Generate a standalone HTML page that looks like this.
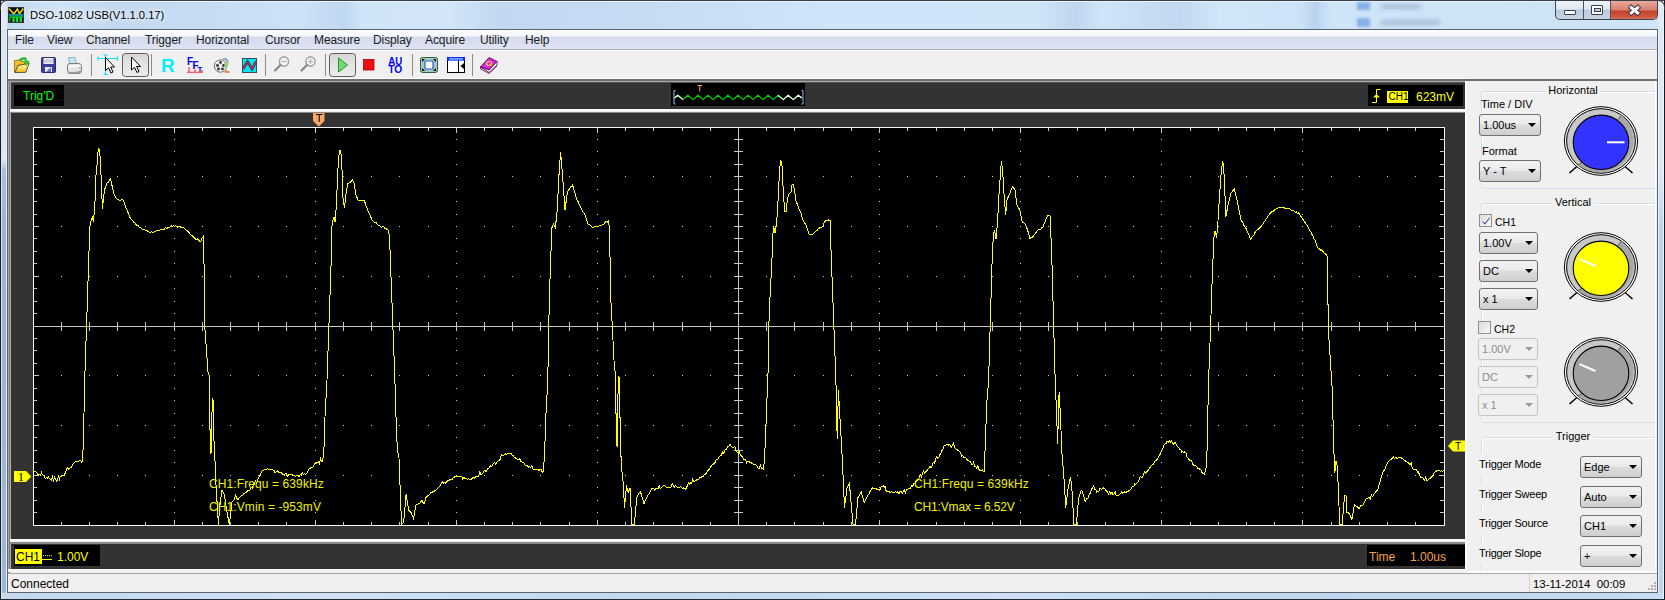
<!DOCTYPE html>
<html><head><meta charset="utf-8">
<style>
*{margin:0;padding:0;box-sizing:border-box}
html,body{width:1665px;height:600px;overflow:hidden;background:#c6ddf3;font-family:"Liberation Sans",sans-serif;font-size:12px;color:#000}
.a{position:absolute}
svg.a{overflow:visible}
#title{left:0;top:0;width:1665px;height:30px;background:linear-gradient(90deg,#c0d8f0 0.00%,#cfe3f7 3.60%,#c2d9f1 6.61%,#c6dcf3 12.01%,#cde2f7 18.02%,#bfd7f0 20.72%,#d0e4f8 21.62%,#d2e5f9 27.03%,#c2d8f0 30.03%,#c4daf2 33.63%,#c6dcf3 38.44%,#cfe4f9 49.85%,#d0e4f8 62.46%,#bfd6ee 64.56%,#d0e4f8 66.07%,#c2d8f0 70.87%,#d2e6f9 73.27%,#cde2f7 78.08%,#b8d3f0 78.98%,#d0e4f8 79.88%,#cfe3f7 93.09%,#cfe4f8 100.00%)}
#menu span{position:absolute;top:3px;font-size:12px;color:#1e1e1e;letter-spacing:-0.1px}
.dark{background:#333333}
.box{background:#000}
.cb{height:22px;border:1px solid #707070;border-radius:3px;background:linear-gradient(#f2f2f2 0%,#ebebeb 45%,#dddddd 50%,#cfcfcf 100%);font-size:11px;color:#000}
.cb span{position:absolute;left:3px;top:4px;white-space:pre}
.cb i{position:absolute;right:4px;top:8px;width:0;height:0;border-left:4px solid transparent;border-right:4px solid transparent;border-top:4px solid #000}
.cb.dis{border-color:#c6c6c6;background:#f0f0f0;color:#8d8d8d}
.cb.dis i{border-top-color:#9a9a9a}
.gb{border:1px solid #d5dfe5;border-radius:3px;box-shadow:inset 1px 1px 0 #fff}
.gl{background:#f0f0f0;text-align:center;font-size:11px;color:#000;height:14px;line-height:14px}
.lbl{font-size:11px;color:#000;white-space:pre;line-height:14px}
.tl{letter-spacing:-0.25px}
.chk{width:13px;height:13px;border:1px solid #8f8f8f;background:linear-gradient(135deg,#dcdcdc,#fafafa)}
.chk.on::after{content:"";position:absolute;left:3.5px;top:1px;width:3px;height:7px;border-right:1.6px solid #4058a0;border-bottom:1.6px solid #4058a0;transform:rotate(38deg)}
.stxt{font-size:12px;white-space:pre}
</style></head><body>
<div id="title" class="a"></div>
<!-- window frame -->
<div class="a" style="left:0;top:0;width:1665px;height:1px;background:#3a3f47"></div>
<div class="a" style="left:1px;top:1px;width:1663px;height:1px;background:#eaf3fb"></div>
<div class="a" style="left:0;top:0;width:1px;height:600px;background:#141a22"></div>
<div class="a" style="left:1px;top:2px;width:1px;height:597px;background:#e2eaf2"></div>
<div class="a" style="left:2px;top:30px;width:4px;height:569px;background:linear-gradient(#dce4ee 0px,#dfe7f0 130px,#a8c0dc 140px,#98b4d4 200px,#9cb8d8 100%)"></div>
<div class="a" style="left:6px;top:30px;width:1px;height:569px;background:#e0ecf8"></div>
<div class="a" style="left:1664px;top:0;width:1px;height:600px;background:#141a22"></div>
<div class="a" style="left:1663px;top:2px;width:1px;height:597px;background:#f0f4fa"></div>
<div class="a" style="left:1658px;top:30px;width:1px;height:569px;background:#e8f0f8"></div>
<div class="a" style="left:1659px;top:30px;width:4px;height:569px;background:linear-gradient(#dce8f4 0px,#dde9f5 140px,#bcd4ec 200px,#bcd4ec 100%)"></div>
<div class="a" style="left:2px;top:593px;width:1661px;height:6px;background:linear-gradient(90deg,#c4d8ee,#cfe2f6 20%,#c2d8ef 40%,#cde0f5 60%,#c0d6ee 80%,#c8dcf2)"></div>
<div class="a" style="left:0;top:599px;width:1665px;height:1px;background:#1e2630"></div>
<div class="a" style="left:1px;top:2px;width:6px;height:28px;background:linear-gradient(90deg,#e6edf5,#dbe6f2)"></div>
<div class="a" style="left:1658px;top:2px;width:6px;height:28px;background:linear-gradient(90deg,#dde8f4,#e6eef6)"></div>
<div class="a" style="left:0;top:0;width:10px;height:10px;border-top:1px solid #3a3f47;border-left:1px solid #3a3f47;border-top-left-radius:7px;box-shadow:inset 1px 1px 0 #f2f6fa"></div>
<div class="a" style="left:1655px;top:0;width:10px;height:10px;border-top:1px solid #3a3f47;border-right:1px solid #3a3f47;border-top-right-radius:7px;box-shadow:inset -1px 1px 0 #f2f6fa"></div>
<!-- title icon -->
<svg class="a" style="left:8px;top:7px" width="16" height="16" viewBox="0 0 16 16">
<rect x="0.5" y="0.5" width="15" height="15" fill="#000" stroke="#3a3434"/>
<polyline points="1,1.6 5.8,7 9.4,2 11.5,7 15.1,1.5" fill="none" stroke="#f0e000" stroke-width="1.5"/>
<rect x="1" y="6.9" width="14" height="2" fill="#119a9a"/>
<polyline points="1.9,14.6 1.9,9.9 4.9,9.9 4.9,14.4 6.1,14.4 6.1,9.9 8.5,9.9 8.5,14.4 9.7,14.4 9.7,9.9 12.1,9.9 12.1,14.4 13.3,14.4 13.3,9.9 15,9.9" fill="none" stroke="#10e030" stroke-width="1.2"/>
</svg>
<div class="a" style="left:30px;top:9px;font-size:11.2px;color:#000;text-shadow:0 0 4px #fff,0 0 6px #fff">DSO-1082 USB(V1.1.0.17)</div>
<!-- faint background items in title (desktop behind glass) -->
<div class="a" style="left:1357px;top:2px;width:13px;height:8px;background:#78a8e0;filter:blur(1.6px);opacity:.85"></div>
<div class="a" style="left:1381px;top:4px;width:40px;height:5px;background:#a0b4d0;filter:blur(2px);opacity:.8"></div>
<div class="a" style="left:1357px;top:18px;width:13px;height:9px;background:#78a8e0;filter:blur(1.6px);opacity:.85"></div>
<div class="a" style="left:1381px;top:20px;width:59px;height:5px;background:#a0b4d0;filter:blur(2px);opacity:.8"></div>
<!-- window buttons -->
<div class="a" style="left:1555px;top:1px;width:103px;height:19px;border:1px solid #3c4450;border-top:none;border-radius:0 0 5px 5px;overflow:hidden;background:linear-gradient(#eef3f9 0%,#dfe8f2 45%,#bccbdc 50%,#c5d3e2 100%)">
 <div class="a" style="left:27px;top:0;width:1px;height:20px;background:#4a5260"></div>
 <div class="a" style="left:54px;top:0;width:1px;height:20px;background:#4a5260"></div>
 <div class="a" style="left:55px;top:0;width:48px;height:20px;background:linear-gradient(#e8a898 0%,#d88070 45%,#c4402c 50%,#d05a40 80%,#e08a70 100%)"></div>
</div>
<div class="a" style="left:1564px;top:10px;width:12px;height:5px;background:#fff;border:1px solid #39404c;border-radius:1px"></div>
<div class="a" style="left:1591px;top:5px;width:12px;height:10px;background:transparent;border:1px solid #39404c;border-radius:1px;box-shadow:inset 0 0 0 2px #fff"></div>
<div class="a" style="left:1594px;top:8px;width:7px;height:4px;border:1px solid #39404c"></div>
<svg class="a" style="left:1627px;top:4px" width="15" height="12" viewBox="0 0 15 12"><path d="M4.3 3.6L10.7 8.9M10.7 3.6L4.3 8.9" stroke="#3a3a48" stroke-width="5" stroke-linecap="square"/><path d="M4.3 3.6L10.7 8.9M10.7 3.6L4.3 8.9" stroke="#fff" stroke-width="3" stroke-linecap="square"/></svg>

<!-- client -->
<div class="a" style="left:7px;top:29px;width:1651px;height:564px;background:#f0f0f0;border:1px solid #5b6570"></div>
<div id="menu" class="a" style="left:8px;top:30px;width:1649px;height:20px;background:linear-gradient(#fbfcfe 0px,#f7f8fc 6px,#d5dcee 7px,#d9dff0 13px,#e0e5f4 19px);border-bottom:1px solid #a9aeba">
<span style="left:7px">File</span><span style="left:39px">View</span><span style="left:78px">Channel</span><span style="left:137px">Trigger</span><span style="left:188px">Horizontal</span><span style="left:257px">Cursor</span><span style="left:306px">Measure</span><span style="left:365px">Display</span><span style="left:417px">Acquire</span><span style="left:472px">Utility</span><span style="left:517px">Help</span>
</div>
<div class="a" style="left:8px;top:50px;width:1649px;height:1px;background:#fdfdfd"></div>
<!-- toolbar -->
<svg class="a" style="left:0;top:0" width="520" height="80" viewBox="0 0 520 80">
<!-- separators -->
<g fill="#8a8a8a"><rect x="91" y="54" width="1" height="22"/><rect x="151" y="54" width="1" height="22"/><rect x="265" y="54" width="1" height="22"/><rect x="325" y="54" width="1" height="22"/><rect x="412" y="54" width="1" height="22"/><rect x="472" y="54" width="1" height="22"/></g>
<!-- pressed buttons -->
<rect x="122.5" y="53.5" width="26" height="23" rx="3" fill="url(#pg)" stroke="#5d5d5d"/>
<rect x="329.5" y="53.5" width="26" height="23" rx="3" fill="url(#pg)" stroke="#5d5d5d"/>
<defs><linearGradient id="pg" x1="0" y1="0" x2="0" y2="1"><stop offset="0" stop-color="#d6d6d6"/><stop offset="0.5" stop-color="#e4e4e4"/><stop offset="1" stop-color="#ececec"/></linearGradient>
<linearGradient id="fold" x1="0" y1="0" x2="0" y2="1"><stop offset="0" stop-color="#fff8b0"/><stop offset="1" stop-color="#f0c020"/></linearGradient></defs>
<!-- open folder -->
<path d="M14.5 60.5 L19.5 60 L21 61.5 L24.5 61.5 L24.5 64 L15.5 72.5 L14.5 72z" fill="#f2c228" stroke="#7a5a10" stroke-width="0.7"/>
<path d="M15 72.5 L17.8 65.5 L29.2 63.2 L25.8 72.3z" fill="url(#fold)" stroke="#3a3010" stroke-width="0.8"/>
<path d="M19.5 60.5 Q22.5 57.2 26.5 59" fill="none" stroke="#22b022" stroke-width="2.4"/>
<path d="M24 59.2 L29.8 61.2 L26.2 66.2z" fill="#2ec82e"/>
<!-- save -->
<rect x="41.5" y="57.5" width="14" height="15" rx="1" fill="#3c3c9a" stroke="#28286e"/>
<rect x="43.5" y="58" width="10" height="6" fill="#f0f0f4"/>
<path d="M44 60h9M44 62h9" stroke="#9090b0" stroke-width="0.7"/>
<rect x="45" y="67" width="7" height="5" fill="#e8e8f0"/>
<path d="M46 72 L51 67 L51 72z" fill="#6a6ab8"/>
<!-- printer -->
<path d="M68.5 57.5 L75 57.5 L76.5 63.5 L69.5 63.5z" fill="#c4e4f8" stroke="#8098b8" stroke-width="0.7"/>
<path d="M67.5 66 Q67.5 63.5 70 63.5 L79 63.5 Q81.5 63.8 81.5 66 L81.5 71.5 Q81 73.5 78.5 73.5 L70 73.5 Q67.5 73.5 67.5 71z" fill="#e4e4e4" stroke="#6a6a6a" stroke-width="0.8"/>
<path d="M68 71.5 Q74 73 81 70.5 L81 72 Q80 73.5 78 73.5 L70 73.5 Q68 73.5 68 72z" fill="#9a9a9a"/>
<path d="M68.5 66.5 L80.5 66" stroke="#ffffff" stroke-width="1.3"/>
<rect x="79" y="67" width="1.6" height="1.5" fill="#50d050"/>
<!-- cursor w/ crosshair -->
<path d="M98 58.5h20M105.5 55v20M98 56.5v4M117.5 56.5v4M103.5 55h4M103.5 74.5h4" stroke="#00e8f0" stroke-width="1.1"/>
<path d="M105.5 57.5 L105.5 70.5 L108.5 67.8 L111 73 L113 72 L110.6 67 L114.5 67z" fill="#fff" stroke="#000" stroke-width="1"/>
<!-- plain cursor -->
<path d="M131.5 57 L131.5 70 L134.5 67.3 L137 72.5 L139 71.5 L136.6 66.5 L140.5 66.5z" fill="#fff" stroke="#000" stroke-width="1"/>
<!-- R -->
<text x="161" y="72" font-family="Liberation Sans" font-weight="bold" font-size="19" fill="#00f0ff">R</text>
<!-- FFT -->
<g fill="#0000e8" font-family="Liberation Sans" font-weight="bold">
<text x="187" y="65" font-size="10">F</text><text x="192.5" y="69" font-size="10">F</text><text x="197.5" y="72" font-size="8">T</text></g>
<path d="M187 72.3h16M189 67v5.5M195 69.5v3M202 70v2.3" stroke="#ff3030" stroke-width="1.1"/>
<!-- film reel -->
<circle cx="220.5" cy="66" r="6.2" fill="#f0f0f0" stroke="#707070" stroke-width="1"/>
<g fill="#383838"><circle cx="220.5" cy="62.5" r="1.4"/><circle cx="217.5" cy="65.5" r="1.4"/><circle cx="223.5" cy="65.5" r="1.4"/><circle cx="218.5" cy="69" r="1.4"/><circle cx="222.5" cy="69" r="1.4"/></g>
<path d="M224 60 L229 63 L226 70 L230 72 L225 73z" fill="#a0c890" opacity="0.9"/>
<path d="M223 59 Q227 58 228 62" stroke="#8890c8" stroke-width="1.5" fill="none"/>
<path d="M225 70.5 L230 71.5 L229 73 L224.5 72.5z" fill="#f08050"/>
<!-- wave icon -->
<rect x="242.5" y="58.5" width="14" height="14" fill="#00e8f0" stroke="#3a4a5a" stroke-width="1"/>
<polyline points="243,69 247.5,61.5 252,69 256,61.5" fill="none" stroke="#3a3a3a" stroke-width="2.6"/>
<polyline points="243,69 247.5,61.5 252,69 256,61.5" fill="none" stroke="#ff20a0" stroke-width="0.9"/>
<!-- zoom out -->
<circle cx="284" cy="61.5" r="4.6" fill="#f4f4f4" stroke="#a8a8a8" stroke-width="1.6"/>
<path d="M281.5 61.5h5" stroke="#b0b0b0" stroke-width="1.2"/>
<path d="M280.5 65 L275 70.5" stroke="#8a8a8a" stroke-width="2.4" stroke-linecap="round"/>
<!-- zoom in -->
<circle cx="310.5" cy="61.5" r="4.6" fill="#f4f4f4" stroke="#a8a8a8" stroke-width="1.6"/>
<path d="M308 61.5h5M310.5 59v5" stroke="#b0b0b0" stroke-width="1.2"/>
<path d="M307 65 L301.5 70.5" stroke="#8a8a8a" stroke-width="2.4" stroke-linecap="round"/>
<!-- play -->
<path d="M338.5 58 L347.5 65 L338.5 72z" fill="#78d878" stroke="#22962a" stroke-width="1"/>
<!-- stop -->
<rect x="363.5" y="59.5" width="10.5" height="10.5" fill="#ee1010" stroke="#a80000" stroke-width="0.8"/>
<!-- AUTO -->
<g fill="#0000ee" font-family="Liberation Sans" font-weight="bold" font-size="10.2"><text x="388.3" y="64.6" textLength="14" lengthAdjust="spacingAndGlyphs">AU</text><text x="388.3" y="73.3" textLength="14" lengthAdjust="spacingAndGlyphs">TO</text></g>
<!-- fullscreen -->
<rect x="420.5" y="57.5" width="17" height="15" rx="2" fill="#a8c8b8" stroke="#2a6050" stroke-width="1"/>
<rect x="425" y="61" width="8" height="8" rx="1" fill="#fff" stroke="#1860e0" stroke-width="1.2"/>
<g fill="#000"><path d="M422 59h3l-3 3z"/><path d="M436 59h-3l3 3z"/><path d="M422 71h3l-3 -3z"/><path d="M436 71h-3l3 -3z"/></g>
<!-- panel icon -->
<rect x="447.5" y="57.5" width="17" height="15" fill="#fff" stroke="#000" stroke-width="1"/>
<rect x="447" y="57" width="18" height="3.6" fill="#0a28f0"/>
<rect x="449" y="58.3" width="14" height="1.2" fill="#a0e0ff"/>
<path d="M458.5 60.5v12" stroke="#000" stroke-width="1"/>
<path d="M464 63 L460.5 66 L464 69z" fill="#000"/>
<!-- help book -->
<path d="M480.5 67 L489 57.5 L497 61.5 L489 70z" fill="#e020e0" stroke="#400040" stroke-width="0.8"/>
<path d="M480.5 67 L489 72.5 L497 65 L497 61.5 L489 70z" fill="#fff" stroke="#400040" stroke-width="0.8"/>
<path d="M480.5 67 L480.5 69 L489 73.5 L497 66" fill="none" stroke="#700070" stroke-width="0.8"/>
<ellipse cx="489" cy="63.5" rx="2.6" ry="2" fill="none" stroke="#e8e020" stroke-width="1.2"/>
</svg>

<!-- scope area -->
<div class="a" style="left:8px;top:78px;width:1458px;height:1px;background:#fafafa"></div>
<div class="a" style="left:8px;top:79px;width:1649px;height:2px;background:#6e6e6e"></div>
<div class="a" style="left:8px;top:81px;width:1px;height:492px;background:#a8a8a8"></div>
<div class="a" style="left:9px;top:81px;width:1px;height:492px;background:#7a7a7a"></div>
<div class="a" style="left:10px;top:81px;width:1455px;height:29px;background:#a8a8a8"></div>
<div class="a" style="left:11px;top:82px;width:1454px;height:1px;background:#555"></div>
<div class="a dark" style="left:11px;top:83px;width:1454px;height:26px"></div>
<div class="a" style="left:10px;top:109px;width:1456px;height:3px;background:linear-gradient(#f4f4f4,#ffffff 50%,#e0e0e0)"></div>
<div class="a" style="left:10px;top:112px;width:1455px;height:1px;background:#8a8a8a"></div>
<div class="a" style="left:10px;top:113px;width:1px;height:426px;background:#b0b0b0"></div>
<div class="a dark" style="left:11px;top:113px;width:1454px;height:426px"></div>
<div class="a" style="left:10px;top:539px;width:1456px;height:3px;background:linear-gradient(#f4f4f4,#ffffff 50%,#e0e0e0)"></div>
<div class="a" style="left:10px;top:542px;width:1455px;height:2px;background:#8a8a8a"></div>
<div class="a" style="left:10px;top:544px;width:1px;height:25px;background:#b0b0b0"></div>
<div class="a dark" style="left:11px;top:544px;width:1454px;height:25px"></div>
<div class="a" style="left:8px;top:569px;width:1458px;height:3px;background:linear-gradient(#f8f8f8,#f0f0f0)"></div>
<div class="a" style="left:1465px;top:81px;width:1px;height:488px;background:#fafafa"></div>

<!-- header content -->
<div class="a box" style="left:14px;top:85px;width:50px;height:21px"></div>
<div class="a stxt" style="left:23px;top:89px;color:#00ff00">Trig'D</div>
<div class="a box" style="left:671px;top:83px;width:134px;height:23px"></div>
<svg class="a" style="left:0;top:0" width="820" height="110" viewBox="0 0 820 110">
<path d="M675.5 90.5h-1.5v13.5h1.5M801.5 90.5h1.5v13.5h-1.5" fill="none" stroke="#a4b8f8" stroke-width="1"/>
<polyline points="674.5,98.0 677.8,95.3 683.0,99.6 687.8,95.3 693.0,99.6 697.9,95.3 703.1,99.6 707.9,95.3 713.1,99.6 717.9,95.3 723.1,99.6 727.9,95.3 733.1,99.6 738.0,95.3 743.2,99.6 748.0,95.3 753.2,99.6 758.0,95.3 763.2,99.6 768.1,95.3 773.3,99.6 778.1,95.3 783.3,99.6 788.1,95.3 793.3,99.6 798.2,95.3 802.0,98.0" fill="none" stroke="#00e000" stroke-width="1.1"/>
<polyline points="674.5,98.0 677.8,95.3 683.0,99.6" fill="none" stroke="#ffffff" stroke-width="1.1"/>
<polyline points="778.1,95.3 783.3,99.6 788.1,95.3 793.3,99.6 798.2,95.3 802.0,98.0" fill="none" stroke="#ffffff" stroke-width="1.1"/>
<path d="M697.5 85.5h4.5M699.75 85.5v6" stroke="#f4a040" stroke-width="1"/>
</svg>
<div class="a box" style="left:1368px;top:85px;width:95px;height:21px"></div>
<svg class="a" style="left:1368px;top:85px" width="20" height="21" viewBox="0 0 20 21">
<path d="M4 17.5h4.5V4.5h4" fill="none" stroke="#ffff00" stroke-width="1"/>
<path d="M5 12.5 L8.5 9 L12 12.5z" fill="#ffff00"/>
</svg>
<div class="a" style="left:1387px;top:91px;width:21px;height:12px;background:#ffff00"></div>
<div class="a stxt" style="left:1388.5px;top:91px;color:#000;font-size:10px">CH1</div>
<div class="a stxt" style="left:1416px;top:90px;color:#ffff00">623mV</div>

<!-- footer content -->
<div class="a box" style="left:14px;top:545px;width:86px;height:21px"></div>
<div class="a" style="left:15px;top:549px;width:27px;height:15px;background:#ffff00"></div>
<div class="a stxt" style="left:16px;top:550px;color:#000">CH1</div>
<svg class="a" style="left:40px;top:550px" width="14" height="12" viewBox="0 0 14 12"><path d="M3 5.7h1M5 5.7h1M7 5.7h1M9 5.7h1M11 5.7h1" stroke="#ffff00" stroke-width="1"/><path d="M2 9.5h10" stroke="#ffff00" stroke-width="1.1"/></svg>
<div class="a stxt" style="left:57px;top:550px;color:#ffff00">1.00V</div>
<div class="a box" style="left:1367px;top:545px;width:98px;height:21px"></div>
<div class="a stxt" style="left:1369px;top:550px;color:#f4a040">Time</div>
<div class="a stxt" style="left:1410px;top:550px;color:#f4a040">1.00us</div>

<!-- graph -->
<div class="a" style="left:33px;top:127px;width:1412px;height:399px;background:#000"></div>
<svg class="a" style="left:0;top:0" width="1665" height="600" viewBox="0 0 1665 600">
<path fill="#d0d0d0" d="M174 139h1v1h-1zM174 151h1v1h-1zM174 164h1v1h-1zM174 176h1v1h-1zM174 189h1v1h-1zM174 201h1v1h-1zM174 214h1v1h-1zM174 226h1v1h-1zM174 238h1v1h-1zM174 251h1v1h-1zM174 263h1v1h-1zM174 276h1v1h-1zM174 288h1v1h-1zM174 301h1v1h-1zM174 313h1v1h-1zM174 338h1v1h-1zM174 350h1v1h-1zM174 363h1v1h-1zM174 375h1v1h-1zM174 388h1v1h-1zM174 400h1v1h-1zM174 413h1v1h-1zM174 425h1v1h-1zM174 437h1v1h-1zM174 450h1v1h-1zM174 462h1v1h-1zM174 475h1v1h-1zM174 487h1v1h-1zM174 500h1v1h-1zM174 512h1v1h-1zM315 139h1v1h-1zM315 151h1v1h-1zM315 164h1v1h-1zM315 176h1v1h-1zM315 189h1v1h-1zM315 201h1v1h-1zM315 214h1v1h-1zM315 226h1v1h-1zM315 238h1v1h-1zM315 251h1v1h-1zM315 263h1v1h-1zM315 276h1v1h-1zM315 288h1v1h-1zM315 301h1v1h-1zM315 313h1v1h-1zM315 338h1v1h-1zM315 350h1v1h-1zM315 363h1v1h-1zM315 375h1v1h-1zM315 388h1v1h-1zM315 400h1v1h-1zM315 413h1v1h-1zM315 425h1v1h-1zM315 437h1v1h-1zM315 450h1v1h-1zM315 462h1v1h-1zM315 475h1v1h-1zM315 487h1v1h-1zM315 500h1v1h-1zM315 512h1v1h-1zM456 139h1v1h-1zM456 151h1v1h-1zM456 164h1v1h-1zM456 176h1v1h-1zM456 189h1v1h-1zM456 201h1v1h-1zM456 214h1v1h-1zM456 226h1v1h-1zM456 238h1v1h-1zM456 251h1v1h-1zM456 263h1v1h-1zM456 276h1v1h-1zM456 288h1v1h-1zM456 301h1v1h-1zM456 313h1v1h-1zM456 338h1v1h-1zM456 350h1v1h-1zM456 363h1v1h-1zM456 375h1v1h-1zM456 388h1v1h-1zM456 400h1v1h-1zM456 413h1v1h-1zM456 425h1v1h-1zM456 437h1v1h-1zM456 450h1v1h-1zM456 462h1v1h-1zM456 475h1v1h-1zM456 487h1v1h-1zM456 500h1v1h-1zM456 512h1v1h-1zM597 139h1v1h-1zM597 151h1v1h-1zM597 164h1v1h-1zM597 176h1v1h-1zM597 189h1v1h-1zM597 201h1v1h-1zM597 214h1v1h-1zM597 226h1v1h-1zM597 238h1v1h-1zM597 251h1v1h-1zM597 263h1v1h-1zM597 276h1v1h-1zM597 288h1v1h-1zM597 301h1v1h-1zM597 313h1v1h-1zM597 338h1v1h-1zM597 350h1v1h-1zM597 363h1v1h-1zM597 375h1v1h-1zM597 388h1v1h-1zM597 400h1v1h-1zM597 413h1v1h-1zM597 425h1v1h-1zM597 437h1v1h-1zM597 450h1v1h-1zM597 462h1v1h-1zM597 475h1v1h-1zM597 487h1v1h-1zM597 500h1v1h-1zM597 512h1v1h-1zM879 139h1v1h-1zM879 151h1v1h-1zM879 164h1v1h-1zM879 176h1v1h-1zM879 189h1v1h-1zM879 201h1v1h-1zM879 214h1v1h-1zM879 226h1v1h-1zM879 238h1v1h-1zM879 251h1v1h-1zM879 263h1v1h-1zM879 276h1v1h-1zM879 288h1v1h-1zM879 301h1v1h-1zM879 313h1v1h-1zM879 338h1v1h-1zM879 350h1v1h-1zM879 363h1v1h-1zM879 375h1v1h-1zM879 388h1v1h-1zM879 400h1v1h-1zM879 413h1v1h-1zM879 425h1v1h-1zM879 437h1v1h-1zM879 450h1v1h-1zM879 462h1v1h-1zM879 475h1v1h-1zM879 487h1v1h-1zM879 500h1v1h-1zM879 512h1v1h-1zM1020 139h1v1h-1zM1020 151h1v1h-1zM1020 164h1v1h-1zM1020 176h1v1h-1zM1020 189h1v1h-1zM1020 201h1v1h-1zM1020 214h1v1h-1zM1020 226h1v1h-1zM1020 238h1v1h-1zM1020 251h1v1h-1zM1020 263h1v1h-1zM1020 276h1v1h-1zM1020 288h1v1h-1zM1020 301h1v1h-1zM1020 313h1v1h-1zM1020 338h1v1h-1zM1020 350h1v1h-1zM1020 363h1v1h-1zM1020 375h1v1h-1zM1020 388h1v1h-1zM1020 400h1v1h-1zM1020 413h1v1h-1zM1020 425h1v1h-1zM1020 437h1v1h-1zM1020 450h1v1h-1zM1020 462h1v1h-1zM1020 475h1v1h-1zM1020 487h1v1h-1zM1020 500h1v1h-1zM1020 512h1v1h-1zM1161 139h1v1h-1zM1161 151h1v1h-1zM1161 164h1v1h-1zM1161 176h1v1h-1zM1161 189h1v1h-1zM1161 201h1v1h-1zM1161 214h1v1h-1zM1161 226h1v1h-1zM1161 238h1v1h-1zM1161 251h1v1h-1zM1161 263h1v1h-1zM1161 276h1v1h-1zM1161 288h1v1h-1zM1161 301h1v1h-1zM1161 313h1v1h-1zM1161 338h1v1h-1zM1161 350h1v1h-1zM1161 363h1v1h-1zM1161 375h1v1h-1zM1161 388h1v1h-1zM1161 400h1v1h-1zM1161 413h1v1h-1zM1161 425h1v1h-1zM1161 437h1v1h-1zM1161 450h1v1h-1zM1161 462h1v1h-1zM1161 475h1v1h-1zM1161 487h1v1h-1zM1161 500h1v1h-1zM1161 512h1v1h-1zM1302 139h1v1h-1zM1302 151h1v1h-1zM1302 164h1v1h-1zM1302 176h1v1h-1zM1302 189h1v1h-1zM1302 201h1v1h-1zM1302 214h1v1h-1zM1302 226h1v1h-1zM1302 238h1v1h-1zM1302 251h1v1h-1zM1302 263h1v1h-1zM1302 276h1v1h-1zM1302 288h1v1h-1zM1302 301h1v1h-1zM1302 313h1v1h-1zM1302 338h1v1h-1zM1302 350h1v1h-1zM1302 363h1v1h-1zM1302 375h1v1h-1zM1302 388h1v1h-1zM1302 400h1v1h-1zM1302 413h1v1h-1zM1302 425h1v1h-1zM1302 437h1v1h-1zM1302 450h1v1h-1zM1302 462h1v1h-1zM1302 475h1v1h-1zM1302 487h1v1h-1zM1302 500h1v1h-1zM1302 512h1v1h-1zM61 176h1v1h-1zM89 176h1v1h-1zM117 176h1v1h-1zM145 176h1v1h-1zM174 176h1v1h-1zM202 176h1v1h-1zM230 176h1v1h-1zM258 176h1v1h-1zM286 176h1v1h-1zM315 176h1v1h-1zM343 176h1v1h-1zM371 176h1v1h-1zM399 176h1v1h-1zM428 176h1v1h-1zM456 176h1v1h-1zM484 176h1v1h-1zM512 176h1v1h-1zM540 176h1v1h-1zM569 176h1v1h-1zM597 176h1v1h-1zM625 176h1v1h-1zM653 176h1v1h-1zM682 176h1v1h-1zM710 176h1v1h-1zM766 176h1v1h-1zM794 176h1v1h-1zM823 176h1v1h-1zM851 176h1v1h-1zM879 176h1v1h-1zM907 176h1v1h-1zM936 176h1v1h-1zM964 176h1v1h-1zM992 176h1v1h-1zM1020 176h1v1h-1zM1048 176h1v1h-1zM1077 176h1v1h-1zM1105 176h1v1h-1zM1133 176h1v1h-1zM1161 176h1v1h-1zM1190 176h1v1h-1zM1218 176h1v1h-1zM1246 176h1v1h-1zM1274 176h1v1h-1zM1302 176h1v1h-1zM1331 176h1v1h-1zM1359 176h1v1h-1zM1387 176h1v1h-1zM1415 176h1v1h-1zM61 226h1v1h-1zM89 226h1v1h-1zM117 226h1v1h-1zM145 226h1v1h-1zM174 226h1v1h-1zM202 226h1v1h-1zM230 226h1v1h-1zM258 226h1v1h-1zM286 226h1v1h-1zM315 226h1v1h-1zM343 226h1v1h-1zM371 226h1v1h-1zM399 226h1v1h-1zM428 226h1v1h-1zM456 226h1v1h-1zM484 226h1v1h-1zM512 226h1v1h-1zM540 226h1v1h-1zM569 226h1v1h-1zM597 226h1v1h-1zM625 226h1v1h-1zM653 226h1v1h-1zM682 226h1v1h-1zM710 226h1v1h-1zM766 226h1v1h-1zM794 226h1v1h-1zM823 226h1v1h-1zM851 226h1v1h-1zM879 226h1v1h-1zM907 226h1v1h-1zM936 226h1v1h-1zM964 226h1v1h-1zM992 226h1v1h-1zM1020 226h1v1h-1zM1048 226h1v1h-1zM1077 226h1v1h-1zM1105 226h1v1h-1zM1133 226h1v1h-1zM1161 226h1v1h-1zM1190 226h1v1h-1zM1218 226h1v1h-1zM1246 226h1v1h-1zM1274 226h1v1h-1zM1302 226h1v1h-1zM1331 226h1v1h-1zM1359 226h1v1h-1zM1387 226h1v1h-1zM1415 226h1v1h-1zM61 276h1v1h-1zM89 276h1v1h-1zM117 276h1v1h-1zM145 276h1v1h-1zM174 276h1v1h-1zM202 276h1v1h-1zM230 276h1v1h-1zM258 276h1v1h-1zM286 276h1v1h-1zM315 276h1v1h-1zM343 276h1v1h-1zM371 276h1v1h-1zM399 276h1v1h-1zM428 276h1v1h-1zM456 276h1v1h-1zM484 276h1v1h-1zM512 276h1v1h-1zM540 276h1v1h-1zM569 276h1v1h-1zM597 276h1v1h-1zM625 276h1v1h-1zM653 276h1v1h-1zM682 276h1v1h-1zM710 276h1v1h-1zM766 276h1v1h-1zM794 276h1v1h-1zM823 276h1v1h-1zM851 276h1v1h-1zM879 276h1v1h-1zM907 276h1v1h-1zM936 276h1v1h-1zM964 276h1v1h-1zM992 276h1v1h-1zM1020 276h1v1h-1zM1048 276h1v1h-1zM1077 276h1v1h-1zM1105 276h1v1h-1zM1133 276h1v1h-1zM1161 276h1v1h-1zM1190 276h1v1h-1zM1218 276h1v1h-1zM1246 276h1v1h-1zM1274 276h1v1h-1zM1302 276h1v1h-1zM1331 276h1v1h-1zM1359 276h1v1h-1zM1387 276h1v1h-1zM1415 276h1v1h-1zM61 375h1v1h-1zM89 375h1v1h-1zM117 375h1v1h-1zM145 375h1v1h-1zM174 375h1v1h-1zM202 375h1v1h-1zM230 375h1v1h-1zM258 375h1v1h-1zM286 375h1v1h-1zM315 375h1v1h-1zM343 375h1v1h-1zM371 375h1v1h-1zM399 375h1v1h-1zM428 375h1v1h-1zM456 375h1v1h-1zM484 375h1v1h-1zM512 375h1v1h-1zM540 375h1v1h-1zM569 375h1v1h-1zM597 375h1v1h-1zM625 375h1v1h-1zM653 375h1v1h-1zM682 375h1v1h-1zM710 375h1v1h-1zM766 375h1v1h-1zM794 375h1v1h-1zM823 375h1v1h-1zM851 375h1v1h-1zM879 375h1v1h-1zM907 375h1v1h-1zM936 375h1v1h-1zM964 375h1v1h-1zM992 375h1v1h-1zM1020 375h1v1h-1zM1048 375h1v1h-1zM1077 375h1v1h-1zM1105 375h1v1h-1zM1133 375h1v1h-1zM1161 375h1v1h-1zM1190 375h1v1h-1zM1218 375h1v1h-1zM1246 375h1v1h-1zM1274 375h1v1h-1zM1302 375h1v1h-1zM1331 375h1v1h-1zM1359 375h1v1h-1zM1387 375h1v1h-1zM1415 375h1v1h-1zM61 425h1v1h-1zM89 425h1v1h-1zM117 425h1v1h-1zM145 425h1v1h-1zM174 425h1v1h-1zM202 425h1v1h-1zM230 425h1v1h-1zM258 425h1v1h-1zM286 425h1v1h-1zM315 425h1v1h-1zM343 425h1v1h-1zM371 425h1v1h-1zM399 425h1v1h-1zM428 425h1v1h-1zM456 425h1v1h-1zM484 425h1v1h-1zM512 425h1v1h-1zM540 425h1v1h-1zM569 425h1v1h-1zM597 425h1v1h-1zM625 425h1v1h-1zM653 425h1v1h-1zM682 425h1v1h-1zM710 425h1v1h-1zM766 425h1v1h-1zM794 425h1v1h-1zM823 425h1v1h-1zM851 425h1v1h-1zM879 425h1v1h-1zM907 425h1v1h-1zM936 425h1v1h-1zM964 425h1v1h-1zM992 425h1v1h-1zM1020 425h1v1h-1zM1048 425h1v1h-1zM1077 425h1v1h-1zM1105 425h1v1h-1zM1133 425h1v1h-1zM1161 425h1v1h-1zM1190 425h1v1h-1zM1218 425h1v1h-1zM1246 425h1v1h-1zM1274 425h1v1h-1zM1302 425h1v1h-1zM1331 425h1v1h-1zM1359 425h1v1h-1zM1387 425h1v1h-1zM1415 425h1v1h-1zM61 475h1v1h-1zM89 475h1v1h-1zM117 475h1v1h-1zM145 475h1v1h-1zM174 475h1v1h-1zM202 475h1v1h-1zM230 475h1v1h-1zM258 475h1v1h-1zM286 475h1v1h-1zM315 475h1v1h-1zM343 475h1v1h-1zM371 475h1v1h-1zM399 475h1v1h-1zM428 475h1v1h-1zM456 475h1v1h-1zM484 475h1v1h-1zM512 475h1v1h-1zM540 475h1v1h-1zM569 475h1v1h-1zM597 475h1v1h-1zM625 475h1v1h-1zM653 475h1v1h-1zM682 475h1v1h-1zM710 475h1v1h-1zM766 475h1v1h-1zM794 475h1v1h-1zM823 475h1v1h-1zM851 475h1v1h-1zM879 475h1v1h-1zM907 475h1v1h-1zM936 475h1v1h-1zM964 475h1v1h-1zM992 475h1v1h-1zM1020 475h1v1h-1zM1048 475h1v1h-1zM1077 475h1v1h-1zM1105 475h1v1h-1zM1133 475h1v1h-1zM1161 475h1v1h-1zM1190 475h1v1h-1zM1218 475h1v1h-1zM1246 475h1v1h-1zM1274 475h1v1h-1zM1302 475h1v1h-1zM1331 475h1v1h-1zM1359 475h1v1h-1zM1387 475h1v1h-1zM1415 475h1v1h-1z"/>
<path fill="#c8c8c8" d="M61 128h1v3h-1zM61 522h1v3h-1zM89 128h1v3h-1zM89 522h1v3h-1zM117 128h1v3h-1zM117 522h1v3h-1zM145 128h1v3h-1zM145 522h1v3h-1zM174 128h1v5h-1zM174 520h1v5h-1zM202 128h1v3h-1zM202 522h1v3h-1zM230 128h1v3h-1zM230 522h1v3h-1zM258 128h1v3h-1zM258 522h1v3h-1zM286 128h1v3h-1zM286 522h1v3h-1zM315 128h1v5h-1zM315 520h1v5h-1zM343 128h1v3h-1zM343 522h1v3h-1zM371 128h1v3h-1zM371 522h1v3h-1zM399 128h1v3h-1zM399 522h1v3h-1zM428 128h1v3h-1zM428 522h1v3h-1zM456 128h1v5h-1zM456 520h1v5h-1zM484 128h1v3h-1zM484 522h1v3h-1zM512 128h1v3h-1zM512 522h1v3h-1zM540 128h1v3h-1zM540 522h1v3h-1zM569 128h1v3h-1zM569 522h1v3h-1zM597 128h1v5h-1zM597 520h1v5h-1zM625 128h1v3h-1zM625 522h1v3h-1zM653 128h1v3h-1zM653 522h1v3h-1zM682 128h1v3h-1zM682 522h1v3h-1zM710 128h1v3h-1zM710 522h1v3h-1zM738 128h1v5h-1zM738 520h1v5h-1zM766 128h1v3h-1zM766 522h1v3h-1zM794 128h1v3h-1zM794 522h1v3h-1zM823 128h1v3h-1zM823 522h1v3h-1zM851 128h1v3h-1zM851 522h1v3h-1zM879 128h1v5h-1zM879 520h1v5h-1zM907 128h1v3h-1zM907 522h1v3h-1zM936 128h1v3h-1zM936 522h1v3h-1zM964 128h1v3h-1zM964 522h1v3h-1zM992 128h1v3h-1zM992 522h1v3h-1zM1020 128h1v5h-1zM1020 520h1v5h-1zM1048 128h1v3h-1zM1048 522h1v3h-1zM1077 128h1v3h-1zM1077 522h1v3h-1zM1105 128h1v3h-1zM1105 522h1v3h-1zM1133 128h1v3h-1zM1133 522h1v3h-1zM1161 128h1v5h-1zM1161 520h1v5h-1zM1190 128h1v3h-1zM1190 522h1v3h-1zM1218 128h1v3h-1zM1218 522h1v3h-1zM1246 128h1v3h-1zM1246 522h1v3h-1zM1274 128h1v3h-1zM1274 522h1v3h-1zM1302 128h1v5h-1zM1302 520h1v5h-1zM1331 128h1v3h-1zM1331 522h1v3h-1zM1359 128h1v3h-1zM1359 522h1v3h-1zM1387 128h1v3h-1zM1387 522h1v3h-1zM1415 128h1v3h-1zM1415 522h1v3h-1zM34 139h3v1h-3zM1440 139h4v1h-4zM34 151h3v1h-3zM1440 151h4v1h-4zM34 164h3v1h-3zM1440 164h4v1h-4zM34 176h5v1h-5zM1439 176h5v1h-5zM34 189h3v1h-3zM1440 189h4v1h-4zM34 201h3v1h-3zM1440 201h4v1h-4zM34 214h3v1h-3zM1440 214h4v1h-4zM34 226h5v1h-5zM1439 226h5v1h-5zM34 238h3v1h-3zM1440 238h4v1h-4zM34 251h3v1h-3zM1440 251h4v1h-4zM34 263h3v1h-3zM1440 263h4v1h-4zM34 276h5v1h-5zM1439 276h5v1h-5zM34 288h3v1h-3zM1440 288h4v1h-4zM34 301h3v1h-3zM1440 301h4v1h-4zM34 313h3v1h-3zM1440 313h4v1h-4zM34 326h5v1h-5zM1439 326h5v1h-5zM34 338h3v1h-3zM1440 338h4v1h-4zM34 350h3v1h-3zM1440 350h4v1h-4zM34 363h3v1h-3zM1440 363h4v1h-4zM34 375h5v1h-5zM1439 375h5v1h-5zM34 388h3v1h-3zM1440 388h4v1h-4zM34 400h3v1h-3zM1440 400h4v1h-4zM34 413h3v1h-3zM1440 413h4v1h-4zM34 425h5v1h-5zM1439 425h5v1h-5zM34 437h3v1h-3zM1440 437h4v1h-4zM34 450h3v1h-3zM1440 450h4v1h-4zM34 462h3v1h-3zM1440 462h4v1h-4zM34 475h5v1h-5zM1439 475h5v1h-5zM34 487h3v1h-3zM1440 487h4v1h-4zM34 500h3v1h-3zM1440 500h4v1h-4zM34 512h3v1h-3zM1440 512h4v1h-4zM34 326h1410v1h-1410zM738 128h1v397h-1zM61 322h1v9h-1zM89 322h1v9h-1zM117 322h1v9h-1zM145 322h1v9h-1zM174 322h1v9h-1zM202 322h1v9h-1zM230 322h1v9h-1zM258 322h1v9h-1zM286 322h1v9h-1zM315 322h1v9h-1zM343 322h1v9h-1zM371 322h1v9h-1zM399 322h1v9h-1zM428 322h1v9h-1zM456 322h1v9h-1zM484 322h1v9h-1zM512 322h1v9h-1zM540 322h1v9h-1zM569 322h1v9h-1zM597 322h1v9h-1zM625 322h1v9h-1zM653 322h1v9h-1zM682 322h1v9h-1zM710 322h1v9h-1zM738 322h1v9h-1zM766 322h1v9h-1zM794 322h1v9h-1zM823 322h1v9h-1zM851 322h1v9h-1zM879 322h1v9h-1zM907 322h1v9h-1zM936 322h1v9h-1zM964 322h1v9h-1zM992 322h1v9h-1zM1020 322h1v9h-1zM1048 322h1v9h-1zM1077 322h1v9h-1zM1105 322h1v9h-1zM1133 322h1v9h-1zM1161 322h1v9h-1zM1190 322h1v9h-1zM1218 322h1v9h-1zM1246 322h1v9h-1zM1274 322h1v9h-1zM1302 322h1v9h-1zM1331 322h1v9h-1zM1359 322h1v9h-1zM1387 322h1v9h-1zM1415 322h1v9h-1zM734 139h9v1h-9zM734 151h9v1h-9zM734 164h9v1h-9zM734 176h9v1h-9zM734 189h9v1h-9zM734 201h9v1h-9zM734 214h9v1h-9zM734 226h9v1h-9zM734 238h9v1h-9zM734 251h9v1h-9zM734 263h9v1h-9zM734 276h9v1h-9zM734 288h9v1h-9zM734 301h9v1h-9zM734 313h9v1h-9zM734 326h9v1h-9zM734 338h9v1h-9zM734 350h9v1h-9zM734 363h9v1h-9zM734 375h9v1h-9zM734 388h9v1h-9zM734 400h9v1h-9zM734 413h9v1h-9zM734 425h9v1h-9zM734 437h9v1h-9zM734 450h9v1h-9zM734 462h9v1h-9zM734 475h9v1h-9zM734 487h9v1h-9zM734 500h9v1h-9zM734 512h9v1h-9z"/>
<path fill="#f4f4f4" d="M33 127h1412v1h-1412zM33 525h1412v1h-1412zM33 127h1v399h-1zM1444 127h1v399h-1z"/>
<polyline points="33.5,471.5 34.9,471.2 36.2,472.2 38.5,475.2 39.5,474.5 40.5,475.2 41.5,472.6 42.5,474.9 43.5,475.3 44.5,476.0 45.2,479.0 46.2,477.4 47.2,478.4 48.2,476.7 50.5,480.0 51.5,480.1 52.5,476.8 53.5,480.7 54.5,477.2 55.5,478.9 56.5,481.5 57.5,479.8 58.5,476.4 59.5,479.3 60.2,476.7 61.5,476.2 62.7,475.4 64.0,476.0 66.2,470.7 67.3,467.5 68.3,469.3 69.4,468.4 70.4,467.5 71.5,467.0 73.0,464.0 74.2,462.6 75.5,461.6 76.7,461.7 77.7,461.6 78.7,461.4 79.7,460.5 80.7,460.6 81.7,462.0 82.7,461.0 83.5,433.8 85.0,371.7 86.4,330.0 88.1,278.7 89.8,227.5 90.8,222.4 91.5,219.0 92.5,217.2 93.5,222.4 94.9,203.6 95.9,176.2 97.3,162.6 98.3,148.2 99.7,150.6 101.1,176.2 102.4,208.7 104.5,189.9 106.9,183.1 108.1,182.4 109.4,180.4 110.6,179.0 113.7,193.3 116.1,198.5 117.2,199.4 118.3,199.1 119.4,200.2 120.5,200.2 122.9,199.5 123.9,201.6 125.0,205.1 126.0,207.8 127.0,210.3 128.1,212.8 129.1,215.5 130.2,217.8 131.4,219.6 132.5,220.7 133.6,222.0 134.8,222.6 135.9,224.4 137.0,225.8 138.2,225.9 139.3,227.5 140.3,227.7 141.4,228.4 142.4,229.3 143.4,229.8 144.4,229.7 145.5,230.1 146.5,230.4 147.5,231.1 148.6,231.6 149.6,232.6 150.6,232.5 151.6,231.6 152.7,232.5 153.7,232.0 154.7,231.9 155.7,231.4 156.7,230.8 157.8,230.7 158.8,230.0 159.8,230.2 160.9,229.8 161.9,229.7 163.0,229.3 164.0,229.5 165.1,227.9 166.1,228.0 167.2,228.5 168.2,227.5 169.3,227.1 170.3,226.8 171.4,226.0 172.4,226.5 173.5,225.8 174.5,226.2 175.5,225.7 176.6,226.1 177.6,227.1 178.6,226.4 179.6,226.2 180.6,227.0 181.7,227.0 182.7,227.4 183.7,227.5 184.7,228.7 185.8,229.9 186.8,230.1 187.8,231.4 188.8,232.2 189.9,233.9 190.9,235.0 191.9,235.2 193.0,236.5 194.0,237.7 195.1,238.6 196.3,239.5 197.4,238.9 198.5,239.8 199.7,241.3 200.8,241.2 202.2,237.9 203.6,236.0 205.0,330.0 208.0,372.0 209.5,377.0 209.5,429.0 210.5,430.0 210.5,453.0 211.5,452.0 212.2,398.0 213.2,400.0 213.2,440.0 214.2,441.0 214.2,460.0 215.0,461.0 215.9,483.0 218.4,524.5 219.6,507.5 222.0,490.3 223.2,492.4 224.5,495.2 227.0,512.4 229.4,524.5 231.9,502.5 233.1,500.7 234.3,499.6 235.5,495.2 236.8,498.1 238.0,500.0 239.2,497.8 240.5,496.5 241.7,495.2 242.9,495.3 244.1,493.3 245.3,492.7 246.5,492.3 247.8,490.4 249.0,490.3 250.1,490.1 251.1,487.5 252.2,488.1 253.2,485.8 254.3,484.3 255.3,481.0 256.4,483.0 257.6,480.3 258.9,477.3 260.1,475.3 261.3,471.9 262.5,470.8 263.8,470.2 265.0,469.6 266.2,469.5 267.4,468.8 268.6,469.2 269.8,469.7 271.0,469.5 272.1,469.7 273.1,470.2 274.2,470.6 275.2,472.9 276.3,471.4 277.3,470.9 278.4,471.9 279.6,472.8 280.9,472.3 282.1,473.8 283.3,474.4 284.4,475.0 285.4,473.5 286.5,473.5 287.5,476.4 288.6,474.9 289.6,474.3 290.7,474.4 291.7,474.6 292.8,475.1 293.8,475.0 294.9,476.0 295.9,476.0 297.0,474.9 298.0,475.6 299.1,476.3 300.1,474.5 301.2,475.0 302.2,472.4 303.3,474.2 304.3,473.8 305.4,474.4 306.6,473.7 307.9,471.0 309.1,469.0 310.3,468.2 311.5,467.5 312.8,467.8 314.0,464.9 315.2,463.3 316.2,463.4 317.3,462.4 318.3,462.0 319.4,463.9 320.4,458.6 321.5,461.6 322.5,460.9 323.8,453.5 325.0,416.8 327.0,380.0 331.6,250.0 331.6,228.0 333.0,220.0 334.0,217.0 335.0,222.0 336.0,210.0 337.0,190.0 338.4,160.0 339.6,150.0 340.8,150.0 342.0,170.0 343.0,198.0 344.4,208.0 346.0,194.0 347.6,184.0 350.0,182.4 352.4,180.0 354.0,183.0 356.0,195.0 358.0,200.0 359.0,200.1 360.0,200.8 361.0,200.8 362.0,200.8 363.0,200.0 364.0,200.4 365.0,202.5 366.0,205.9 367.0,208.0 368.0,210.6 369.0,212.7 370.0,215.2 371.0,217.4 372.0,220.0 373.0,221.2 374.0,222.2 375.0,222.4 376.0,222.6 377.0,223.9 378.0,224.7 379.0,226.0 380.0,225.7 381.0,227.1 382.0,227.2 383.0,226.2 384.0,227.0 385.0,228.4 386.0,228.2 387.0,229.9 388.0,230.0 389.6,236.0 390.0,250.0 394.9,380.0 396.0,416.8 397.3,448.6 399.0,458.4 400.5,497.6 401.5,524.5 403.7,522.0 406.1,494.0 408.6,509.9 411.0,512.4 412.2,515.5 413.5,518.5 416.0,505.0 417.2,504.5 418.4,503.7 419.6,503.8 422.0,500.1 423.2,502.9 424.5,503.8 425.8,497.6 427.0,496.4 428.2,495.6 429.4,494.5 430.7,492.8 431.9,492.7 432.9,491.7 434.0,491.6 435.0,490.1 436.1,490.2 437.1,489.0 438.2,487.7 439.2,486.6 440.3,485.6 441.4,482.7 442.5,481.6 443.6,483.4 444.6,482.4 445.7,483.3 446.8,481.4 447.9,480.8 449.0,480.5 450.1,479.3 451.1,479.0 452.2,479.9 453.2,477.9 454.3,477.5 455.3,476.3 456.4,476.8 457.5,476.9 458.6,476.5 459.7,476.2 460.8,476.5 461.8,476.6 462.9,479.6 464.0,476.9 465.1,478.6 466.2,478.0 467.4,479.1 468.6,478.8 469.9,479.4 471.1,479.3 472.2,478.3 473.3,477.5 474.4,478.1 475.5,477.0 476.5,476.6 477.6,476.5 478.7,476.1 479.8,471.9 480.9,474.4 481.9,474.3 483.0,473.0 484.0,470.8 485.1,470.6 486.1,472.0 487.2,469.3 488.2,468.2 489.3,467.8 490.4,465.6 491.5,466.3 492.6,465.0 493.6,463.3 494.7,462.8 495.8,464.5 496.9,462.2 498.0,460.9 499.1,460.2 500.1,459.6 501.2,454.9 502.2,456.1 503.3,455.4 504.3,454.6 505.4,454.0 506.6,454.3 507.9,453.0 509.1,453.6 510.3,453.5 511.3,453.6 512.4,455.3 513.4,455.7 514.5,457.6 515.5,458.0 516.6,458.0 517.6,459.7 518.7,460.0 519.8,458.1 520.9,461.6 522.0,461.8 523.1,462.5 524.2,463.1 525.3,465.3 526.4,465.8 527.5,465.8 528.5,467.1 529.6,466.3 530.6,467.4 531.7,465.4 532.7,468.8 533.8,469.4 534.8,469.5 535.9,469.4 536.9,469.5 538.0,469.6 539.1,471.0 540.2,469.3 541.2,469.9 542.3,472.6 543.4,470.7 544.6,453.5 545.8,416.8 547.8,380.0 548.6,330.0 550.3,268.5 552.0,227.5 553.7,224.0 555.4,227.5 557.2,210.4 558.9,176.2 560.6,151.6 562.6,176.2 565.0,210.4 567.4,191.6 568.4,190.4 569.4,188.8 570.5,186.9 571.5,186.6 572.5,184.8 576.0,196.7 577.1,200.2 578.3,202.1 579.4,205.3 580.4,206.6 581.4,209.3 582.5,210.8 583.5,212.7 584.5,213.8 587.9,224.0 588.9,224.8 589.9,224.8 591.0,226.0 592.0,227.0 593.0,227.5 594.1,226.7 595.1,226.6 596.2,226.6 597.3,227.0 598.4,226.1 599.5,225.9 600.5,225.9 601.6,225.8 602.7,224.2 603.9,224.1 605.0,222.4 606.1,221.4 607.3,222.0 608.4,220.7 609.4,227.5 611.0,302.7 612.5,330.0 614.5,370.0 615.5,372.0 615.5,413.0 616.5,414.0 616.5,445.0 617.5,446.0 618.2,376.0 619.2,377.0 619.2,417.0 620.5,418.0 620.5,456.0 621.5,457.0 621.5,468.0 623.3,483.0 624.5,507.5 626.5,485.4 628.2,492.7 630.0,487.8 631.9,524.5 634.3,524.5 636.8,497.6 638.0,494.8 639.2,492.7 640.4,491.5 644.1,503.8 645.4,499.9 646.6,497.6 647.8,495.0 649.0,494.1 650.3,491.0 651.5,489.0 652.6,488.9 653.7,488.4 654.8,490.6 655.9,488.2 656.9,488.4 658.0,488.9 659.1,485.6 660.2,488.2 661.3,487.8 663.7,485.4 664.9,485.6 666.2,487.5 667.4,487.1 668.6,487.8 669.8,487.9 671.0,486.8 672.3,483.4 673.5,485.9 674.5,487.1 675.5,485.6 676.6,486.7 677.6,487.8 678.6,487.5 679.6,487.4 680.7,486.8 681.7,487.4 682.7,488.5 683.8,487.7 684.8,489.0 685.8,489.0 687.0,486.6 688.3,482.8 689.5,484.2 690.6,483.0 691.6,483.6 692.7,479.4 693.8,481.7 694.8,481.4 695.9,480.5 696.9,479.4 698.0,479.3 699.1,479.0 700.1,476.9 701.2,477.5 702.2,476.0 703.3,476.7 704.3,474.2 705.4,474.4 706.4,472.8 707.5,471.0 708.5,470.7 709.6,468.2 710.6,467.0 711.7,465.5 712.7,464.6 713.8,463.9 714.8,463.0 715.9,460.3 716.9,459.5 718.0,459.4 719.0,457.0 720.1,456.0 721.3,455.4 722.5,452.1 723.8,453.4 725.0,449.9 726.2,449.3 727.5,447.0 728.7,446.7 729.9,444.4 731.2,446.4 732.4,447.7 733.6,447.4 734.8,446.0 736.1,451.3 737.3,452.3 738.3,453.2 739.4,451.9 740.4,455.2 741.5,455.8 742.5,457.0 743.6,459.3 744.6,459.7 745.7,460.1 746.7,462.7 747.8,461.3 748.8,461.4 749.9,462.2 750.9,462.3 752.0,463.3 753.0,463.8 754.1,464.6 755.1,464.5 756.2,465.2 757.2,466.5 758.3,468.4 759.3,468.2 760.4,465.5 761.5,468.5 762.6,468.2 763.7,469.5 765.4,441.3 766.7,404.5 767.9,380.0 768.8,327.0 769.6,305.0 770.4,290.0 772.4,250.0 772.6,238.0 773.6,226.0 775.0,233.0 776.4,224.0 777.6,210.0 778.6,188.0 779.6,170.0 780.6,159.6 782.0,166.0 783.2,190.0 784.6,211.0 786.0,212.0 787.6,198.0 789.0,194.0 791.0,192.0 792.0,185.0 793.0,184.0 794.4,190.0 796.0,201.0 798.0,206.0 799.0,208.9 800.0,211.3 801.0,213.0 802.4,219.0 803.5,220.3 804.5,223.0 805.6,224.0 806.7,227.2 807.9,230.6 809.0,234.0 810.0,234.6 811.0,234.4 812.0,234.5 813.0,234.0 814.0,233.2 815.0,231.7 816.0,231.0 817.0,230.7 818.0,229.2 819.0,228.6 820.0,227.7 821.0,227.4 822.0,227.0 823.0,225.9 824.0,223.4 825.0,221.5 826.0,220.4 827.0,220.6 828.0,219.8 829.0,220.3 830.0,220.0 831.0,250.0 835.9,380.0 837.2,438.8 838.4,390.0 839.6,411.9 842.0,453.5 844.5,507.5 847.0,487.8 849.4,483.0 850.6,497.6 853.1,524.5 855.5,524.5 858.0,497.6 859.1,496.1 860.1,493.9 861.2,491.5 864.1,502.5 865.3,500.7 866.6,497.8 867.8,495.2 869.0,493.8 870.2,491.0 871.5,489.0 872.7,487.8 873.7,488.2 874.7,488.0 875.8,488.4 876.8,489.2 877.8,489.8 878.8,489.0 879.9,490.2 881.0,486.9 882.1,486.4 883.2,485.9 884.2,487.2 885.2,486.6 886.2,491.5 887.2,491.8 888.3,491.6 889.3,491.9 890.4,492.7 891.4,491.6 892.5,492.8 893.5,492.7 894.6,492.3 895.7,491.8 896.8,492.5 897.9,491.6 898.9,494.0 900.0,491.6 901.1,490.9 902.2,493.6 903.3,491.5 904.4,490.1 905.4,492.4 906.5,489.2 907.5,489.7 908.6,488.4 909.6,488.7 910.7,487.8 911.7,485.7 912.8,486.1 913.8,483.2 914.9,483.5 915.9,481.5 917.0,481.4 918.0,479.3 919.1,477.5 920.2,474.6 921.3,476.8 922.4,474.3 923.4,470.9 924.5,473.4 925.6,471.8 926.7,471.1 927.8,469.5 928.9,468.0 930.0,466.4 931.1,467.8 932.2,465.2 933.2,462.7 934.3,463.0 935.4,460.8 936.5,456.6 937.6,458.4 938.7,457.3 939.7,455.2 940.8,453.2 941.8,450.6 942.9,449.5 943.9,446.4 945.0,445.0 946.1,445.0 947.1,444.2 948.2,445.4 949.2,444.1 950.3,445.5 951.3,447.0 952.4,445.0 953.6,443.2 954.8,448.1 956.1,449.0 957.3,449.9 958.4,450.5 959.5,451.8 960.6,452.5 961.7,456.3 962.7,455.2 963.8,457.1 964.9,458.1 966.0,457.7 967.1,459.7 968.2,460.4 969.3,461.6 970.4,461.6 971.5,464.3 972.5,464.9 973.6,462.4 974.7,466.6 975.8,466.3 976.9,468.2 977.9,465.6 979.0,469.7 980.0,470.4 981.1,470.8 982.1,469.7 983.2,471.6 984.2,471.2 985.4,441.3 986.7,404.5 988.6,380.0 992.4,250.0 993.6,234.0 994.6,230.0 996.0,239.0 997.6,222.0 998.6,200.0 1000.0,180.0 1001.4,161.0 1002.6,170.0 1004.0,194.0 1005.6,215.0 1007.0,200.0 1008.3,196.8 1009.6,194.0 1011.0,190.0 1012.4,187.0 1013.6,188.0 1015.0,190.0 1017.0,205.0 1018.0,206.7 1019.0,208.5 1020.0,211.0 1022.0,221.0 1023.0,222.6 1024.0,222.7 1025.0,224.0 1026.3,226.7 1027.6,230.0 1030.0,239.0 1031.0,237.6 1032.0,237.6 1033.0,236.6 1034.0,235.0 1035.0,234.1 1036.0,232.5 1037.0,231.1 1038.0,230.0 1039.0,229.5 1040.0,229.3 1041.0,228.9 1042.0,227.5 1043.0,227.0 1044.0,224.0 1045.0,221.8 1046.0,219.0 1048.0,215.6 1050.0,215.6 1051.0,238.0 1051.6,250.0 1055.2,380.0 1056.7,416.8 1057.6,443.7 1059.1,392.3 1060.1,409.4 1062.0,453.5 1064.5,485.4 1065.7,507.5 1068.2,487.8 1070.6,476.8 1072.4,495.2 1073.8,524.5 1075.0,524.5 1076.3,524.5 1078.7,497.6 1079.7,494.5 1080.7,491.8 1081.7,490.3 1085.3,501.3 1086.5,498.8 1087.8,498.2 1089.0,495.2 1090.2,493.1 1091.5,489.3 1092.7,487.8 1093.7,485.9 1094.7,489.3 1095.8,489.4 1096.8,492.3 1097.8,491.2 1098.8,491.5 1100.0,488.1 1101.2,489.3 1102.5,488.8 1103.7,487.8 1104.9,489.0 1106.2,490.6 1107.4,491.8 1108.6,494.0 1109.7,491.6 1110.8,494.2 1111.9,491.9 1113.0,495.1 1114.0,494.2 1115.1,491.8 1116.2,495.7 1117.3,495.2 1118.4,495.2 1119.5,494.8 1120.6,493.7 1121.7,491.5 1122.8,493.4 1123.8,492.3 1124.9,491.8 1126.0,493.2 1127.1,491.3 1128.2,491.5 1129.3,490.4 1130.4,489.9 1131.5,487.9 1132.6,486.2 1133.6,486.6 1134.7,484.0 1135.8,484.4 1136.9,483.3 1138.0,481.7 1139.1,479.9 1140.2,476.8 1141.3,477.3 1142.4,477.7 1143.4,475.1 1144.5,471.4 1145.6,473.0 1146.7,472.0 1147.8,470.7 1148.9,469.6 1150.0,467.4 1151.1,465.6 1152.2,464.7 1153.2,464.8 1154.3,462.2 1155.4,460.8 1156.5,460.6 1157.6,458.4 1158.7,456.7 1159.7,455.2 1160.8,452.8 1161.8,450.7 1162.9,448.3 1163.9,445.4 1165.0,443.7 1166.1,443.8 1167.1,441.0 1168.2,442.5 1169.2,440.8 1170.3,442.5 1171.3,440.6 1172.4,443.0 1173.6,444.1 1174.8,442.1 1176.1,444.5 1177.3,446.2 1178.4,447.1 1179.5,449.3 1180.6,449.0 1181.7,451.9 1182.7,451.5 1183.8,452.8 1184.9,451.8 1186.0,453.0 1187.1,457.2 1188.2,458.2 1189.3,460.0 1190.4,460.1 1191.5,461.1 1192.5,463.5 1193.6,465.7 1194.7,465.4 1195.8,465.9 1196.9,467.0 1197.9,468.5 1199.0,468.2 1200.0,469.4 1201.1,470.3 1202.1,472.7 1203.2,473.5 1204.2,474.4 1206.7,465.8 1207.9,409.4 1208.6,380.0 1210.5,330.0 1212.2,278.7 1213.9,237.7 1215.0,231.0 1216.6,237.7 1218.0,220.7 1219.7,193.3 1221.4,169.4 1222.8,160.9 1224.2,176.2 1225.9,216.6 1228.3,203.6 1231.0,193.3 1232.1,191.8 1233.3,190.3 1234.4,189.2 1237.8,203.6 1241.2,220.7 1242.2,221.8 1243.3,223.5 1244.3,226.3 1245.4,227.6 1246.4,229.2 1247.5,231.8 1248.6,233.9 1249.7,237.5 1250.8,239.5 1251.8,237.3 1252.8,236.4 1253.9,235.0 1254.9,232.6 1256.0,230.9 1257.2,229.8 1258.3,229.7 1259.4,228.0 1260.6,226.8 1261.7,225.8 1262.8,224.1 1263.8,222.2 1264.9,221.2 1266.0,218.9 1267.1,218.1 1268.2,215.6 1269.2,214.7 1270.3,213.1 1271.4,212.3 1272.4,211.3 1273.5,211.1 1274.5,209.7 1275.6,209.5 1276.7,208.5 1277.7,208.1 1278.8,207.0 1279.8,207.3 1280.8,208.0 1281.9,207.7 1282.9,207.3 1283.9,207.5 1284.9,208.7 1285.9,208.4 1287.0,207.9 1288.0,208.3 1289.0,208.7 1290.0,208.9 1291.1,210.3 1292.1,210.8 1293.1,210.1 1294.2,211.2 1295.2,212.4 1296.2,211.6 1297.2,213.1 1298.3,212.9 1299.3,213.8 1300.5,215.8 1301.6,217.4 1302.8,219.1 1303.9,221.1 1305.0,222.4 1306.2,224.0 1307.3,225.6 1308.5,227.9 1309.6,230.3 1310.7,231.6 1311.9,234.3 1313.0,236.0 1314.0,238.9 1315.0,240.1 1316.1,243.2 1317.1,246.1 1318.1,248.0 1319.2,248.6 1320.4,250.2 1321.5,250.0 1322.7,251.0 1323.8,252.9 1325.0,253.1 1327.3,256.5 1328.4,330.0 1331.6,380.0 1332.3,389.8 1333.5,441.3 1334.8,473.1 1336.0,460.9 1337.2,465.8 1338.4,490.3 1339.7,524.5 1342.1,524.5 1344.6,495.2 1346.3,496.4 1347.0,512.4 1348.2,512.7 1349.5,513.6 1351.9,519.7 1354.4,505.0 1355.6,505.7 1356.8,506.6 1358.0,507.5 1359.2,508.9 1360.5,506.1 1361.7,505.0 1362.9,505.0 1364.2,502.3 1365.4,500.1 1366.6,498.5 1367.9,498.1 1369.1,497.6 1370.3,498.7 1371.5,494.9 1372.8,496.9 1374.0,494.0 1375.2,493.1 1376.4,490.8 1377.6,490.3 1382.5,473.1 1383.5,470.9 1384.5,470.1 1385.5,468.1 1386.5,464.6 1387.5,463.3 1388.7,461.1 1390.0,460.0 1391.2,459.7 1392.4,457.9 1393.5,457.1 1394.5,458.4 1395.6,457.5 1396.7,458.1 1397.7,458.0 1398.8,457.9 1399.8,457.7 1400.9,457.2 1401.9,459.0 1402.9,458.8 1404.0,460.2 1405.0,460.8 1406.0,461.3 1407.0,462.1 1408.1,462.3 1409.1,463.5 1410.2,465.0 1411.2,463.3 1412.3,468.0 1413.3,469.1 1414.4,469.5 1415.4,469.7 1416.4,469.4 1417.5,472.7 1418.5,471.9 1419.5,475.0 1420.5,476.8 1421.5,478.0 1422.6,477.8 1423.6,478.9 1424.6,480.2 1425.7,476.9 1426.7,480.5 1427.9,480.3 1429.2,479.0 1430.4,478.2 1431.6,476.8 1432.8,475.9 1434.0,473.1 1435.2,471.9 1436.4,471.0 1437.7,470.7 1438.9,470.7 1440.1,471.2 1441.4,470.9 1442.7,471.3 1444.0,470.2" fill="none" stroke="#ffff00" stroke-width="1" stroke-linejoin="miter" shape-rendering="crispEdges"/>
<!-- trigger marker top -->
<path d="M313 113h11.5v8l-5.75 5.5l-5.75 -5.5z" fill="#f7a866"/>
<path d="M316 114.5h6.5M319.2 114.5v7.5" stroke="#000" stroke-width="1"/>
<!-- channel marker left -->
<path d="M14 471h12l5.3 5.5l-5.3 5.5h-12z" fill="#ffff00"/>
<text x="17.8" y="481" font-family="Liberation Serif" font-size="12.5" fill="#000">1</text>
<!-- trigger level marker right -->
<path d="M1465 440.5h-12l-5 5.5l5 5.5h12z" fill="#ffff00"/>
<text x="1455" y="450" font-family="Liberation Sans" font-size="10" fill="#000">T</text>
</svg>
<div class="a stxt" style="left:209px;top:477px;color:#f0f000;letter-spacing:0.1px">CH1:Frequ = 639kHz</div>
<div class="a stxt" style="left:209px;top:500px;color:#f0f000;letter-spacing:0.1px">CH1:Vmin = -953mV</div>
<div class="a stxt" style="left:914px;top:477px;color:#f0f000;letter-spacing:0.1px">CH1:Frequ = 639kHz</div>
<div class="a stxt" style="left:914px;top:500px;color:#f0f000;letter-spacing:-0.15px">CH1:Vmax = 6.52V</div>

<!-- right panel -->
<div class="a" style="left:1466px;top:80px;width:191px;height:1px;background:#6e6e6e"></div>
<div class="a" style="left:1466px;top:81px;width:1px;height:488px;background:#fcfcfc"></div>
<div class="a" style="left:1655px;top:81px;width:1px;height:488px;background:#ffffff"></div>
<div class="a" style="left:1466px;top:81px;width:189px;height:490px;overflow:hidden">
 <div class="a" style="left:-1466px;top:-81px;width:1665px;height:600px">
<div class="gb a" style="left:1481px;top:91px;width:180px;height:98px"></div><div class="a gl" style="left:1546px;top:83px;width:54px">Horizontal</div>
<div class="a lbl" style="left:1481px;top:97px">Time / DIV</div>
<div class="cb a" style="left:1479px;top:114px;width:62px"><span>1.00us</span><i></i></div>
<div class="a lbl" style="left:1482px;top:144px">Format</div>
<div class="cb a" style="left:1479px;top:160px;width:62px"><span>Y - T</span><i></i></div>
<svg class="a" style="left:1560.6px;top:100.5px" width="80" height="80" viewBox="1560.6 100.5 80 80">
<line x1="1569.1" y1="172.5" x2="1577.6" y2="165.0" stroke="#000" stroke-width="1.5"/>
<line x1="1632.1" y1="172.5" x2="1623.6" y2="165.0" stroke="#000" stroke-width="1.5"/>
<ellipse cx="1600.6" cy="140.5" rx="36.6" ry="34.3" fill="#fff" stroke="#000" stroke-width="1"/>
<ellipse cx="1600.6" cy="140.5" rx="34.4" ry="32.3" fill="#c8c8c8" stroke="#000" stroke-width="1"/>
<path d="M1620.6 114.5 A34 32 0 0 1 1577.6 164.5 L1581.6 161.5 A28 28 0 0 0 1617.6 119.5z" fill="#a8a8a8"/>
<line x1="1617.1" y1="120.0" x2="1621.1" y2="114.5" stroke="#707070" stroke-width="1.1"/>
<line x1="1581.6" y1="161.5" x2="1577.6" y2="165.0" stroke="#707070" stroke-width="1.1"/>
<ellipse cx="1600.6" cy="141.8" rx="27.8" ry="27.2" fill="#3333ff" stroke="#000" stroke-width="1.1"/>
<line x1="1606.6" y1="141.8" x2="1624.1" y2="141.8" stroke="#fff" stroke-width="2"/>
</svg>
<div class="gb a" style="left:1481px;top:203px;width:180px;height:220px"></div><div class="a gl" style="left:1552px;top:195px;width:42px">Vertical</div>
<div class="a chk on" style="left:1479px;top:214px"></div><div class="a lbl" style="left:1495px;top:215px;font-size:10.5px">CH1</div>
<div class="cb a" style="left:1479px;top:232px;width:59px"><span>1.00V</span><i></i></div>
<div class="cb a" style="left:1479px;top:260px;width:59px"><span>DC</span><i></i></div>
<div class="cb a" style="left:1479px;top:288px;width:59px"><span>x 1</span><i></i></div>
<svg class="a" style="left:1560.6px;top:227px" width="80" height="80" viewBox="1560.6 227 80 80">
<line x1="1569.1" y1="299" x2="1577.6" y2="291.5" stroke="#000" stroke-width="1.5"/>
<line x1="1632.1" y1="299" x2="1623.6" y2="291.5" stroke="#000" stroke-width="1.5"/>
<ellipse cx="1600.6" cy="267" rx="36.6" ry="34.3" fill="#fff" stroke="#000" stroke-width="1"/>
<ellipse cx="1600.6" cy="267" rx="34.4" ry="32.3" fill="#c8c8c8" stroke="#000" stroke-width="1"/>
<path d="M1620.6 241 A34 32 0 0 1 1577.6 291 L1581.6 288 A28 28 0 0 0 1617.6 246z" fill="#a8a8a8"/>
<line x1="1617.1" y1="246.5" x2="1621.1" y2="241" stroke="#707070" stroke-width="1.1"/>
<line x1="1581.6" y1="288" x2="1577.6" y2="291.5" stroke="#707070" stroke-width="1.1"/>
<ellipse cx="1600.6" cy="268.3" rx="27.8" ry="27.2" fill="#ffff00" stroke="#000" stroke-width="1.1"/>
<line x1="1595.1" y1="266.0" x2="1579.0" y2="259.1" stroke="#fff" stroke-width="2"/>
</svg>
<div class="a chk" style="left:1478px;top:321px"></div><div class="a lbl" style="left:1494px;top:322px;font-size:10.5px">CH2</div>
<div class="cb dis a" style="left:1478px;top:338px;width:60px"><span>1.00V</span><i></i></div>
<div class="cb dis a" style="left:1478px;top:366px;width:60px"><span>DC</span><i></i></div>
<div class="cb dis a" style="left:1478px;top:394px;width:60px"><span>x 1</span><i></i></div>
<svg class="a" style="left:1560.6px;top:332.3px" width="80" height="80" viewBox="1560.6 332.3 80 80">
<line x1="1569.1" y1="404.3" x2="1577.6" y2="396.8" stroke="#000" stroke-width="1.5"/>
<line x1="1632.1" y1="404.3" x2="1623.6" y2="396.8" stroke="#000" stroke-width="1.5"/>
<ellipse cx="1600.6" cy="372.3" rx="36.6" ry="34.3" fill="#fff" stroke="#000" stroke-width="1"/>
<ellipse cx="1600.6" cy="372.3" rx="34.4" ry="32.3" fill="#c8c8c8" stroke="#000" stroke-width="1"/>
<path d="M1620.6 346.3 A34 32 0 0 1 1577.6 396.3 L1581.6 393.3 A28 28 0 0 0 1617.6 351.3z" fill="#a8a8a8"/>
<line x1="1617.1" y1="351.8" x2="1621.1" y2="346.3" stroke="#707070" stroke-width="1.1"/>
<line x1="1581.6" y1="393.3" x2="1577.6" y2="396.8" stroke="#707070" stroke-width="1.1"/>
<ellipse cx="1600.6" cy="373.6" rx="27.8" ry="27.2" fill="#a0a0a0" stroke="#000" stroke-width="1.1"/>
<line x1="1595.1" y1="371.3" x2="1579.0" y2="364.4" stroke="#fff" stroke-width="2"/>
</svg>
<div class="gb a" style="left:1481px;top:437px;width:180px;height:140px"></div><div class="a gl" style="left:1553px;top:429px;width:40px">Trigger</div>
<div class="a lbl tl" style="left:1479px;top:454px;background:#f0f0f0;padding:3px 0 4px">Trigger Mode</div>
<div class="cb a" style="left:1580px;top:456px;width:62px"><span>Edge</span><i></i></div>
<div class="a lbl tl" style="left:1479px;top:484px;background:#f0f0f0;padding:3px 0 4px">Trigger Sweep</div>
<div class="cb a" style="left:1580px;top:486px;width:62px"><span>Auto</span><i></i></div>
<div class="a lbl tl" style="left:1479px;top:513px;background:#f0f0f0;padding:3px 0 4px">Trigger Source</div>
<div class="cb a" style="left:1580px;top:515px;width:62px"><span>CH1</span><i></i></div>
<div class="a lbl tl" style="left:1479px;top:543px;background:#f0f0f0;padding:3px 0 4px">Trigger Slope</div>
<div class="cb a" style="left:1580px;top:545px;width:62px"><span>+</span><i></i></div>
 </div>
</div>

<div class="a" style="left:1466px;top:571px;width:191px;height:2px;background:#fbfbfb"></div>
<!-- status bar -->
<div class="a" style="left:8px;top:573px;width:1649px;height:1px;background:#a8a8a8"></div>
<div class="a" style="left:8px;top:574px;width:1649px;height:18px;background:#f0eeee"></div>
<div class="a stxt" style="left:11px;top:577px">Connected</div>
<div class="a" style="left:1529px;top:574px;width:1px;height:18px;background:#d0d0d0"></div>
<div class="a stxt" style="left:1533px;top:578px;font-size:11.4px">13-11-2014  00:09</div>
<svg class="a" style="left:1645px;top:580px" width="12" height="12" viewBox="0 0 12 12"><g fill="#b0b0b0"><rect x="9" y="2" width="2" height="2"/><rect x="6" y="5" width="2" height="2"/><rect x="9" y="5" width="2" height="2"/><rect x="3" y="8" width="2" height="2"/><rect x="6" y="8" width="2" height="2"/><rect x="9" y="8" width="2" height="2"/></g></svg>
</body></html>
